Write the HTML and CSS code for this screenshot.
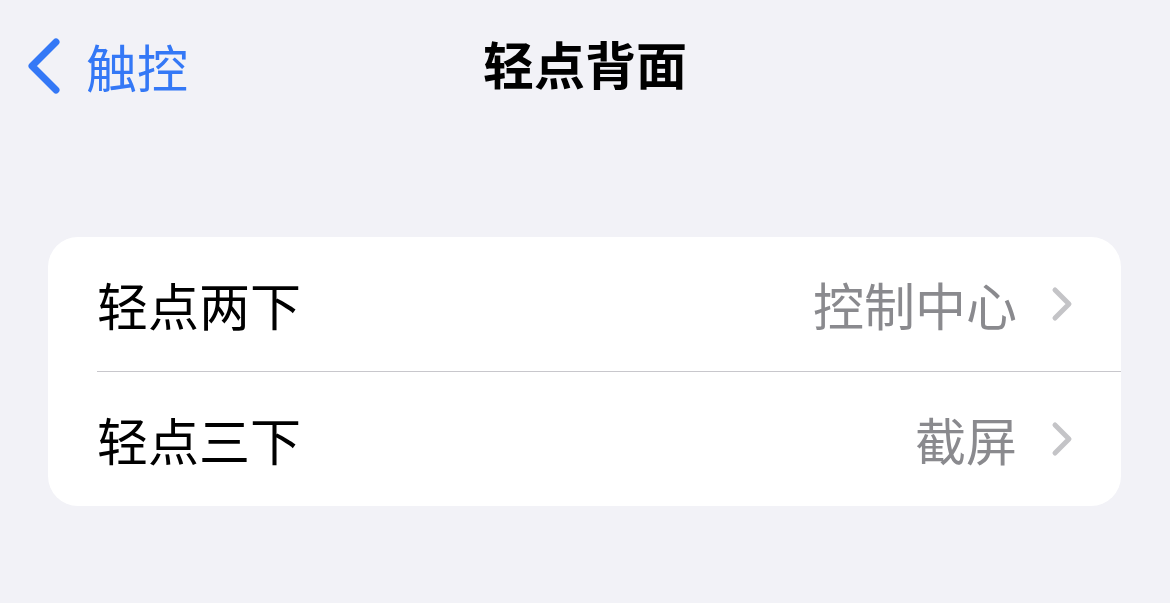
FILE: index.html
```html
<!DOCTYPE html>
<html lang="zh-CN">
<head>
    <meta charset="UTF-8">
    <title>轻点背面</title>
    <link rel="stylesheet" href="styles.css">
</head>
<body>
<!-- 顶部导航栏 -->
<div class="nav-bar">
    <a class="nav-back" href="javascript:;">
        <svg class="back-icon" width="36" height="56" viewBox="0 0 36 56">
            <path d="M30 4 L6 28 L30 52" fill="none" stroke="#3478f6" stroke-width="7" stroke-linecap="round" stroke-linejoin="round"/>
        </svg>
        <span class="back-text">触控</span>
    </a>
    <div class="nav-title">轻点背面</div>
</div>

<!-- 设置分组 -->
<div class="group">
    <div class="cell">
        <span class="cell-label">轻点两下</span>
        <span class="cell-value">控制中心</span>
        <svg class="chevron" width="24" height="36" viewBox="0 0 24 36">
            <path d="M4 4 L18 18 L4 32" fill="none" stroke="#c4c4c7" stroke-width="5" stroke-linecap="round" stroke-linejoin="round"/>
        </svg>
    </div>
    <div class="cell">
        <span class="cell-label">轻点三下</span>
        <span class="cell-value">截屏</span>
        <svg class="chevron" width="24" height="36" viewBox="0 0 24 36">
            <path d="M4 4 L18 18 L4 32" fill="none" stroke="#c4c4c7" stroke-width="5" stroke-linecap="round" stroke-linejoin="round"/>
        </svg>
    </div>
</div>
</body>
</html>
```

FILE: styles.css
```css
* {
    margin: 0;
    padding: 0;
}

body {
    background-color: #f2f2f7;
    font-family: "Noto Sans CJK SC", "Noto Sans", sans-serif;
    width: 1170px;
    height: 603px;
    overflow: hidden;
}

/* 导航栏 */
.nav-bar {
    position: relative;
    height: 134px;
    display: flex;
    align-items: center;
    justify-content: center;
}

/* 返回按钮压在标题栏左侧 */
.nav-back {
    position: absolute;
    left: 26px;
    top: 38px;
    display: flex;
    align-items: flex-start;
    text-decoration: none;
    color: #3478f6;
}

.back-icon {
    display: block;
}

.back-text {
    font-size: 51px;
    line-height: 56px;
    margin-left: 24px;
}

.nav-title {
    font-size: 51px;
    font-weight: 700;
    color: #000;
    line-height: 60px;
    margin-bottom: 9px;
}

/* 圆角分组 */
.group {
    margin: 103px 49px 0 48px;
    background-color: #fff;
    border-radius: 30px;
    overflow: hidden;
}

.cell {
    height: 134px;
    margin-left: 49px;
    padding-right: 46px;
    display: flex;
    align-items: center;
}

.cell + .cell {
    border-top: 1px solid #c8c7cc;
}

.cell-label {
    flex: 1;
    font-size: 51px;
    color: #000;
}

.cell-value {
    font-size: 51px;
    color: #8a8a8e;
    margin-right: 34px;
}

.chevron {
    display: block;
}
```
